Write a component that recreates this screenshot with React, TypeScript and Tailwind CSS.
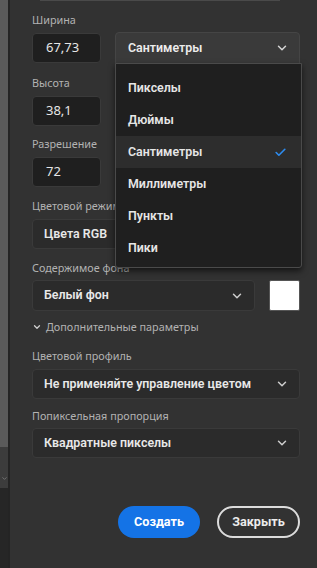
import { ChevronDown, Check } from 'lucide-react';

const bold = { fontFamily: 'Roboto, "Noto Sans", sans-serif' };

const Label = ({ children }: { children: string }) => (
  <div className="h-[14px] text-[10.8px] leading-[14px] text-[#b3b3b3] whitespace-nowrap">{children}</div>
);

const NumInput = ({ value }: { value: string }) => (
  <div className="mt-[6px] h-[30px] w-[69px] rounded-[4px] border border-[#3a3a3a] bg-[#1f1f1f] pl-[13px] flex items-center text-[13px] text-[#e6e6e6]">
    {value}
  </div>
);

const Select = ({ value, className = '' }: { value: string; className?: string }) => (
  <div
    className={`h-[30px] rounded-[4px] border border-[#3a3a3a] bg-[#2b2b2b] pl-[11px] pr-[10px] flex items-center justify-between text-[12.4px] font-semibold text-[#e8e8e8] ${className}`}
    style={bold}
  >
    <span className="whitespace-nowrap">{value}</span>
    <ChevronDown size={14} strokeWidth={2.5} className="text-[#cfcfcf]" />
  </div>
);

const units = ['Пикселы', 'Дюймы', 'Сантиметры', 'Миллиметры', 'Пункты', 'Пики'];

export default function App() {
  return (
    <div className="flex h-[568px] w-[317px] bg-[#323232] overflow-hidden" style={{ fontFamily: '"Noto Sans", "Open Sans", sans-serif' }}>
      <div className="flex w-[8px] flex-col">
        <div className="h-[447px] bg-[#5a5a5a]" />
        <div className="flex h-[41px] items-end justify-center bg-[#3c3c3c] pb-[6px]">
          <ChevronDown size={7} strokeWidth={3} className="text-[#777]" />
        </div>
        <div className="flex-1 bg-[#262626]" />
      </div>
      <div className="w-[2px] bg-[#242424]" />

      <div className="relative flex-1 pl-[22px] pr-[17px]">
        <div className="ml-[8px] h-px w-[240px] bg-[#4a4a4a]" />

        <div className="mt-[12px] flex gap-[14px]">
          <div>
            <Label>Ширина</Label>
            <NumInput value="67,73" />
          </div>
          <div className="flex-1 pt-[19px]">
            <div
              className="h-[32px] rounded-t-[4px] border border-[#454545] bg-[#3a3a3a] pl-[12px] pr-[10px] flex items-center justify-between text-[12.4px] font-semibold text-[#ececec]"
              style={bold}
            >
              <span>Сантиметры</span>
              <ChevronDown size={14} strokeWidth={2.5} className="text-[#d6d6d6]" />
            </div>
          </div>
        </div>

        <div className="mt-[12px]">
          <Label>Высота</Label>
          <NumInput value="38,1" />
        </div>

        <div className="mt-[11px]">
          <Label>Разрешение</Label>
          <NumInput value="72" />
        </div>

        <div className="mt-[12px]">
          <Label>Цветовой режим</Label>
        </div>
        <Select value="Цвета RGB" className="mt-[6px] w-[180px]" />

        <div className="mt-[12px]">
          <Label>Содержимое фона</Label>
        </div>
        <div className="mt-[5px] flex gap-[14px]">
          <Select value="Белый фон" className="h-[31px] flex-1" />
          <div className="h-[31px] w-[31px] rounded-[2px] border border-[#555] bg-white" />
        </div>

        <div className="mt-[9px] flex items-center gap-[4px] text-[10.8px] leading-[14px] text-[#b3b3b3]">
          <ChevronDown size={10} strokeWidth={3} className="text-[#d0d0d0]" />
          <span>Дополнительные параметры</span>
        </div>

        <div className="mt-[15px]">
          <Label>Цветовой профиль</Label>
        </div>
        <Select value="Не применяйте управление цветом" className="mt-[6px]" />

        <div className="mt-[10px]">
          <Label>Попиксельная пропорция</Label>
        </div>
        <Select value="Квадратные пикселы" className="mt-[5px]" />

        <div className="mt-[48px] flex justify-end gap-[17px]" style={bold}>
          <button className="h-[32px] w-[82px] rounded-full bg-[#1473e6] text-[12.6px] font-bold text-white">Создать</button>
          <button className="h-[32px] w-[83px] rounded-full border-2 border-[#dcdcdc] text-[12.6px] font-bold text-[#ececec]">Закрыть</button>
        </div>

        <div
          className="absolute left-[105px] top-[63px] w-[187px] rounded-b-[3px] border border-[#4a4a4a] bg-[#1f1f1f] pt-[8px] pb-[3px] shadow-[0_3px_6px_rgba(0,0,0,0.6)]"
          style={bold}
        >
          {units.map((u) => (
            <div
              key={u}
              className={`flex h-[32px] items-center justify-between pl-[12px] pr-[14px] text-[12.4px] font-semibold text-[#e6e6e6] ${u === 'Сантиметры' ? 'bg-[#2d2d2d]' : ''}`}
            >
              <span>{u}</span>
              {u === 'Сантиметры' && <Check size={13} strokeWidth={3} className="text-[#2d8cf0]" />}
            </div>
          ))}
        </div>
      </div>
    </div>
  );
}
